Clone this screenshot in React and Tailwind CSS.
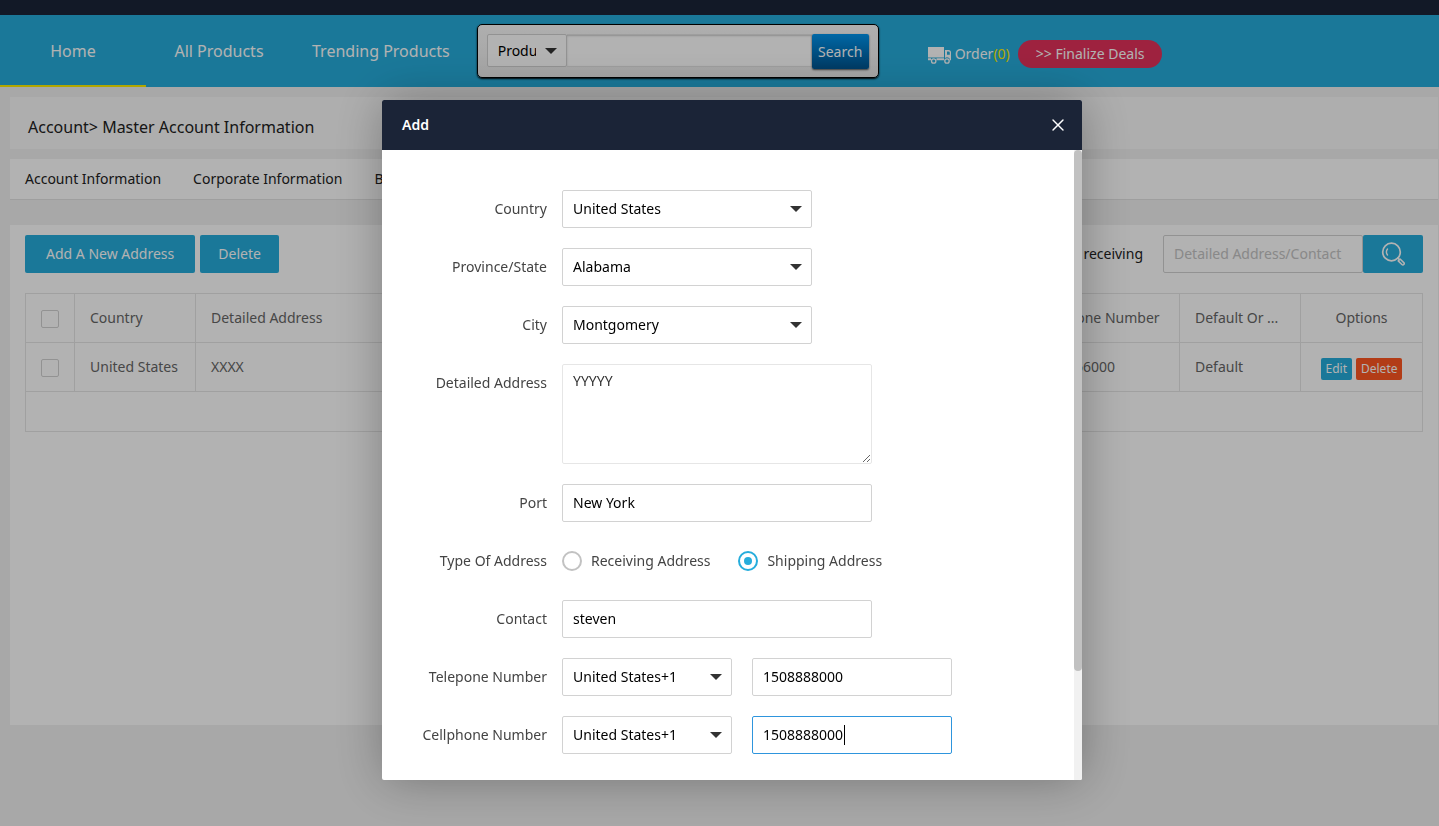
import { useState } from "react";
import { X } from "lucide-react";

const countries = ["United States"];
const states = ["Alabama"];
const cities = ["Montgomery"];
const dialCodes = ["United States+1"];

const inputClass = "h-[38px] rounded-xs border bg-white px-[10px] text-black outline-none";

function Caret() {
  return (
    <svg className="pointer-events-none absolute right-[10px] top-1/2 -mt-[3px] h-[6px] w-3" viewBox="0 0 12 6">
      <path d="M0 0h12L6 6z" fill="#333" />
    </svg>
  );
}

function Select({ id, options, className, label }) {
  return (
    <div className={`relative ${className}`}>
      <select id={id} aria-label={label} className="h-full w-full appearance-none rounded-xs border border-[#d2d2d2] bg-white pl-[10px] pr-[30px] text-black outline-none">
        {options.map((option) => (
          <option key={option}>{option}</option>
        ))}
      </select>
      <Caret />
    </div>
  );
}

function Row({ label, htmlFor, children }) {
  return (
    <div className="flex items-start">
      <label htmlFor={htmlFor} className="mr-[15px] w-[165px] shrink-0 text-right leading-[38px] text-[#444]">
        {label}
      </label>
      {children}
    </div>
  );
}

function Radio({ label, checked, onChange }) {
  return (
    <label className="flex h-[38px] items-center gap-[9px] text-[#444]">
      <input
        type="radio"
        name="addressType"
        checked={checked}
        onChange={onChange}
        className="m-0 flex size-5 appearance-none items-center justify-center rounded-full border-2 border-[#c2c2c2] checked:border-[#26addc] checked:before:size-2 checked:before:rounded-full checked:before:bg-[#26addc]"
      />
      {label}
    </label>
  );
}

function TruckIcon() {
  return (
    <svg className="h-5 w-6" viewBox="0 0 24 20" fill="#fff">
      <path d="M0 3h16v10.500H0z" />
      <path d="M0 14.300h3v2H0zM8.500 14.300H16v2H8.500z" />
      <path fillRule="evenodd" d="M17 6h3.500a2.500 2.500 0 0 1 2.500 2.500v7.800h-1a3 3 0 0 0-5-2.300zm2 1.500v3.200h2.800V8.800a1.300 1.300 0 0 0-1.300-1.300z" />
      <circle cx="5.700" cy="17" r="2.200" fill="none" stroke="#fff" strokeWidth="1.300" />
      <circle cx="19" cy="17" r="2.200" fill="none" stroke="#fff" strokeWidth="1.300" />
    </svg>
  );
}

function SearchIcon() {
  return (
    <svg className="size-6" viewBox="0 0 24 24" fill="none" stroke="#fff" strokeLinecap="round">
      <circle cx="10.500" cy="10" r="8.800" strokeWidth="1.700" />
      <path d="M6.500 7a5 5 0 0 0 0 6" strokeWidth="1.400" />
      <path d="M16.800 16l1.500 1.500" strokeWidth="1.700" />
      <path d="M17.200 18.900l1.900-1.900 3.700 3.600a1.300 1.300 0 0 1-1.900 1.900z" strokeWidth="1.500" strokeLinejoin="round" />
    </svg>
  );
}

function Header() {
  return (
    <header>
      <div className="h-[15px] bg-[#1b2538]" />
      <div className="flex h-[72px] items-start bg-[#26addc] text-white">
        <nav className="flex text-base leading-[72px]">
          <a href="#" className="h-[72px] min-w-[146px] border-b-2 border-[#fff000] px-5 text-center">Home</a>
          <a href="#" className="min-w-[146px] px-5 text-center">All Products</a>
          <a href="#" className="px-5 text-center">Trending Products</a>
        </nav>
        <form className="ml-[7px] mt-[9px] flex h-[54px] rounded-[5px] border border-black bg-linear-to-b from-[#fafafa] to-[#ececec] px-[9px] pt-[9px] shadow-[0_1px_2px_#000]">
          <Select label="Search in" options={["Products"]} className="h-[33px] w-20" />
          <input aria-label="Search" className="h-[33px] w-[245px] border-y border-[#e2e2e2] bg-white px-2 text-black shadow-[inset_0_1px_2px_#ccc] outline-none" />
          <button type="button" className="h-[35px] w-[57px] rounded-xs bg-linear-to-b from-[#0095ee] to-[#00548f] shadow-[0_1px_2px_#555]">Search</button>
        </form>
        <a href="#" className="ml-[49px] mt-[25px] flex h-7 items-center gap-[3px]">
          <TruckIcon />
          <span>Order<span className="text-[#fff000]">(0)</span></span>
        </a>
        <a href="#" className="ml-2 mt-[25px] h-7 rounded-full bg-[#e2325b] px-[18px] leading-7">&gt;&gt; Finalize Deals</a>
      </div>
    </header>
  );
}

function CheckBox({ label }) {
  return <input type="checkbox" aria-label={label} className="m-0 mt-0.5 block size-[18px] appearance-none rounded-xs border border-[#d2d2d2] bg-white" />;
}

function AddressTable() {
  const cell = "h-[49px] truncate border border-[#e6e6e6] px-[15px] font-normal";

  return (
    <table className="mt-5 w-full table-fixed border-collapse text-left text-[#666]">
      <colgroup>
        <col className="w-[49px]" />
        <col className="w-[121px]" />
        <col />
        <col className="w-[160px]" />
        <col className="w-[121px]" />
        <col className="w-[122px]" />
      </colgroup>
      <thead>
        <tr>
          <th className={cell}><CheckBox label="Select all" /></th>
          <th className={cell}>Country</th>
          <th className={cell}>Detailed Address</th>
          <th className={cell}>Cellphone Number</th>
          <th className={cell}>Default Or ...</th>
          <th className={`${cell} text-center`}>Options</th>
        </tr>
      </thead>
      <tbody>
        <tr>
          <td className={cell}><CheckBox label="Select row" /></td>
          <td className={cell}>United States</td>
          <td className={cell}>XXXX</td>
          <td className={cell}>1508866000</td>
          <td className={cell}>Default</td>
          <td className={cell}>
            <div className="flex justify-center gap-1 pt-1 text-xs leading-[22px] text-white">
              <button className="rounded-xs bg-[#26addc] px-[5px]">Edit</button>
              <button className="rounded-xs bg-[#ff5722] px-[5px]">Delete</button>
            </div>
          </td>
        </tr>
        <tr>
          <td colSpan={6} className="h-10 border border-[#e6e6e6]" />
        </tr>
      </tbody>
    </table>
  );
}

function AccountPage() {
  return (
    <main className="mr-px pl-[10px] pt-[10px]">
      <h1 className="h-[52px] bg-[#f9f9f9] pl-[18px] text-base leading-[60px] text-[#222]">Account&gt; Master Account Information</h1>
      <nav className="mt-[10px] flex h-[41px] gap-8 border-b border-[#e2e2e2] bg-white pl-[15px] leading-10 text-[#222]">
        <a href="#">Account Information</a>
        <a href="#">Corporate Information</a>
        <a href="#">Bank Information</a>
      </nav>
      <section className="mt-[25px] min-h-[500px] bg-white px-[15px] pt-[10px]">
        <div className="flex items-center leading-[38px]">
          <button className="h-[38px] rounded-xs bg-[#26addc] px-[21px] text-white">Add A New Address</button>
          <button className="ml-[5px] h-[38px] rounded-xs bg-[#26addc] px-[18px] text-white">Delete</button>
          <label htmlFor="keyword" className="ml-auto mr-5 text-[#222]">receiving</label>
          <input id="keyword" placeholder="Detailed Address/Contact" className={`${inputClass} w-[200px] border-[#d2d2d2] placeholder:text-[#c4c4c4]`} />
          <button aria-label="Search addresses" className="flex h-[38px] w-[60px] items-center justify-center rounded-xs bg-[#26addc]">
            <SearchIcon />
          </button>
        </div>
        <AddressTable />
      </section>
    </main>
  );
}

function AddDialog() {
  const [type, setType] = useState("shipping");

  return (
    <div className="fixed inset-0 flex items-start justify-center bg-black/30 pl-[25px] pt-[100px]">
      <div role="dialog" aria-label="Add" className="flex max-h-[680px] w-[700px] flex-col overflow-hidden rounded-xs bg-white shadow-[1px_1px_50px_rgba(0,0,0,0.3)]">
        <div className="flex h-[50px] shrink-0 items-center justify-between bg-[#1b2437] pl-5 pr-[14px] text-white">
          <h2 className="font-semibold">Add</h2>
          <button aria-label="Close"><X className="size-5" strokeWidth={1.7} /></button>
        </div>
        <div className="flex min-h-0">
          <form className="flex grow flex-col gap-5 overflow-y-auto pb-40 pt-10 [scrollbar-width:none]">
            <Row label="Country" htmlFor="country">
              <Select id="country" options={countries} className="h-[38px] w-[250px]" />
            </Row>
            <Row label="Province/State" htmlFor="state">
              <Select id="state" options={states} className="h-[38px] w-[250px]" />
            </Row>
            <Row label="City" htmlFor="city">
              <Select id="city" options={cities} className="h-[38px] w-[250px]" />
            </Row>
            <Row label="Detailed Address" htmlFor="address">
              <textarea id="address" defaultValue="YYYYY" className="block h-[100px] w-[310px] resize rounded-xs border border-[#e6e6e6] px-[10px] py-[6px] leading-5 text-[#333] outline-none" />
            </Row>
            <Row label="Port" htmlFor="port">
              <input id="port" defaultValue="New York" className={`${inputClass} w-[310px] border-[#d2d2d2] pb-0.5`} />
            </Row>
            <Row label="Type Of Address">
              <div className="flex gap-7">
                <Radio label="Receiving Address" checked={type === "receiving"} onChange={() => setType("receiving")} />
                <Radio label="Shipping Address" checked={type === "shipping"} onChange={() => setType("shipping")} />
              </div>
            </Row>
            <Row label="Contact" htmlFor="contact">
              <input id="contact" defaultValue="steven" className={`${inputClass} w-[310px] border-[#d2d2d2] pb-0.5`} />
            </Row>
            <Row label="Telepone Number" htmlFor="telephone">
              <Select label="Telephone country code" options={dialCodes} className="mr-5 h-[38px] w-[170px]" />
              <input id="telephone" defaultValue="1508888000" className={`${inputClass} w-[200px] border-[#d2d2d2] pb-0.5`} />
            </Row>
            <Row label="Cellphone Number" htmlFor="cellphone">
              <Select label="Cellphone country code" options={dialCodes} className="mr-5 h-[38px] w-[170px]" />
              <div className="relative">
                <input id="cellphone" defaultValue="1508888000" className={`${inputClass} w-[200px] border-[#2e95dd] pb-0.5 caret-transparent`} />
                <span className="pointer-events-none absolute left-[92px] top-[9px] h-5 w-px bg-black" />
              </div>
            </Row>
          </form>
          <div className="w-2 shrink-0 bg-[#f1f1f1]">
            <div className="h-[521px] rounded-full bg-[#c1c1c1]" />
          </div>
        </div>
      </div>
    </div>
  );
}

export default function App() {
  return (
    <div className="min-h-screen bg-[#f1f1f1] font-['Noto_Sans','Open_Sans',sans-serif] text-sm">
      <Header />
      <AccountPage />
      <AddDialog />
    </div>
  );
}
